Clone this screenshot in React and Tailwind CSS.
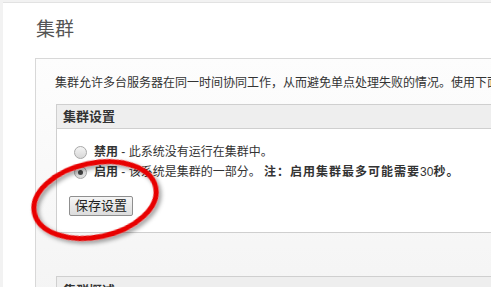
import React from "react";

const font = { fontFamily: '"Liberation Sans", "Noto Sans CJK SC", sans-serif' };

function Radio({ checked }) {
  return (
    <span className="w-[13px] h-[13px] rounded-full border border-[#a8a8a8] bg-gradient-to-b from-[#f4f4f4] to-[#d8d8d8] flex items-center justify-center shrink-0">
      {checked && <span className="w-[5px] h-[5px] rounded-full bg-[#444]" />}
    </span>
  );
}

export default function App() {
  return (
    <div className="w-[491px] h-[287px] overflow-hidden bg-[#f2f2f2] relative text-[#222]" style={font}>
      <div className="mt-[2px] ml-[3px] h-[285px] bg-white border-t border-[#e2e2e2]">
        <div className="pl-[33px] pt-[15px] h-[55px] text-[19px] leading-[24px] text-[#555]">集群</div>
        <div className="ml-[32px] border-l border-t border-[#d8d8d8] bg-gradient-to-b from-[#fdfdfd] to-[#f4f4f4] h-[240px]">
          <div className="pl-[19px] pt-[16px] h-[45px] text-[12px] leading-[16px] whitespace-nowrap text-[#333]">
            集群允许多台服务器在同一时间协同工作，从而避免单点处理失败的情况。使用下面的设置来启用或禁用集群。
          </div>
          <div className="ml-[20px] border-l border-t border-b border-[#cfcfcf] bg-white h-[129px]">
            <div className="h-[24px] bg-[#eeeeee] border-b border-[#cfcfcf] pl-[6px] flex items-center text-[13px] font-bold text-[#333]">
              集群设置
            </div>
            <div className="pl-[17px] pt-[13px] text-[12px] text-[#333]">
              <div className="flex items-center gap-[7px] h-[20px] whitespace-nowrap">
                <Radio />
                <span><b>禁用</b> - 此系统没有运行在集群中。</span>
              </div>
              <div className="flex items-center gap-[7px] h-[20px] whitespace-nowrap">
                <Radio checked />
                <span><b>启用</b> - 该系统是集群的一部分。 <b className="tracking-[1px]">注：启用集群最多可能需要</b><span className="font-normal">30</span><b className="tracking-[1px]">秒。</b></span>
              </div>
              <div className="pt-[14px] -ml-[5px]">
                <button className="h-[20px] w-[64px] border border-[#8f8f8f] rounded-[2px] bg-gradient-to-b from-[#f5f5f5] to-[#dcdcdc] text-[13px] leading-[18px] text-[#222]" style={font}>
                  保存设置
                </button>
              </div>
            </div>
          </div>
          <div className="h-[43px]" />
          <div className="ml-[20px] border-l border-t border-[#cfcfcf] bg-[#eeeeee] h-[30px] pl-[6px] pt-[4px] text-[13px] font-bold text-[#333]">
            集群概述
          </div>
        </div>
      </div>
      <svg className="absolute left-0 top-0 pointer-events-none" width="491" height="287">
        <defs>
          <filter id="sh" x="-20%" y="-20%" width="140%" height="140%">
            <feDropShadow dx="2" dy="3" stdDeviation="2" floodColor="#000" floodOpacity="0.4" />
          </filter>
        </defs>
        <ellipse cx="95" cy="200" rx="62" ry="37" transform="rotate(-12 95 200)" fill="none" stroke="#e80000" strokeWidth="5" filter="url(#sh)" />
      </svg>
    </div>
  );
}
